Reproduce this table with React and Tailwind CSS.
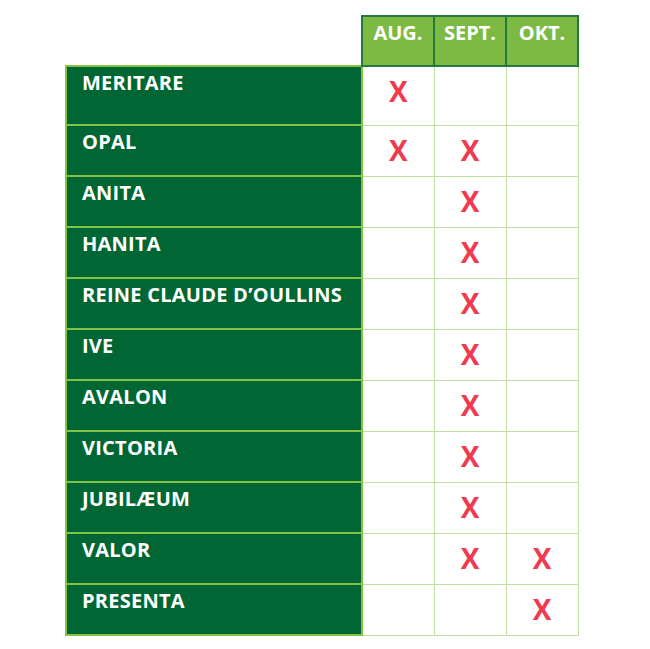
const MONTHS = ['AUG.', 'SEPT.', 'OKT.'];

const ROWS = [
  { name: 'MERITARE', marks: [true, false, false] },
  { name: 'OPAL', marks: [true, true, false] },
  { name: 'ANITA', marks: [false, true, false] },
  { name: 'HANITA', marks: [false, true, false] },
  { name: 'REINE CLAUDE D’OULLINS', marks: [false, true, false] },
  { name: 'IVE', marks: [false, true, false] },
  { name: 'AVALON', marks: [false, true, false] },
  { name: 'VICTORIA', marks: [false, true, false] },
  { name: 'JUBILÆUM', marks: [false, true, false] },
  { name: 'VALOR', marks: [false, true, true] },
  { name: 'PRESENTA', marks: [false, false, true] },
];

export default function App() {
  return (
    <div className="w-[650px] h-[649px] bg-white pt-[15px] pl-[65px] font-['Open_Sans',sans-serif]">
      <table className="border-collapse table-fixed">
        <thead>
          <tr>
            <th className="w-[296px] p-0"></th>
            {MONTHS.map((m) => (
              <th
                key={m}
                className="w-[72px] h-[50px] p-0 pt-[2px] align-top border-2 border-[#237a3c] bg-[#7dba44] text-white text-[20px] leading-[27px] font-bold"
              >
                {m}
              </th>
            ))}
          </tr>
        </thead>
        <tbody>
          {ROWS.map((row, i) => (
            <tr key={row.name}>
              <td
                className={`${i === 0 ? 'h-[59px]' : 'h-[51px]'} p-0 pl-[15px] pt-[2px] align-top border-2 border-[#82c343] bg-[#006633] text-white text-[20px] leading-[27px] tracking-[0.25px] font-bold whitespace-nowrap`}
              >
                {row.name}
              </td>
              {row.marks.map((on, j) => (
                <td
                  key={j}
                  className="p-0 pt-[4px] align-top text-center border border-[#c3e0a2] text-[#f03a50] text-[28px] font-bold leading-[40px]"
                >
                  {on ? 'X' : ''}
                </td>
              ))}
            </tr>
          ))}
        </tbody>
      </table>
    </div>
  );
}
